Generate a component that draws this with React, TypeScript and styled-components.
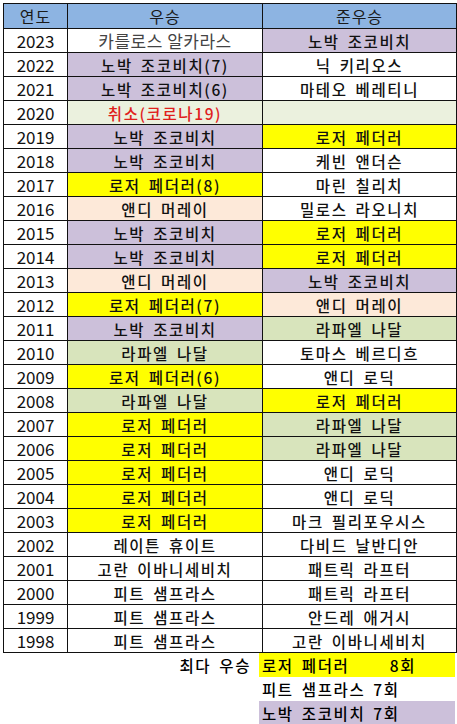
import React from "react";
import styled, { createGlobalStyle } from "styled-components";

const GlobalStyle = createGlobalStyle`
  html, body {
    margin: 0;
    padding: 0;
    background: #fff;
  }
  body {
    font-family: "Noto Sans CJK KR", "Noto Sans", sans-serif;
    color: #000;
  }
`;

type Tone = "none" | "lav" | "yellow" | "peach" | "green" | "cancel";

const tones: Record<Tone, string> = {
  none: "#ffffff",
  lav: "#ccc0da",
  yellow: "#ffff00",
  peach: "#fde9d9",
  green: "#d8e4bc",
  cancel: "#ebf1de",
};

type Row = {
  year: string;
  win: string;
  winTone: Tone;
  runner: string;
  runnerTone: Tone;
};

const rows: Row[] = [
  { year: "2023", win: "카를로스 알카라스", winTone: "none", runner: "노박 조코비치", runnerTone: "lav" },
  { year: "2022", win: "노박 조코비치(7)", winTone: "lav", runner: "닉 키리오스", runnerTone: "none" },
  { year: "2021", win: "노박 조코비치(6)", winTone: "lav", runner: "마테오 베레티니", runnerTone: "none" },
  { year: "2020", win: "취소(코로나19)", winTone: "cancel", runner: "", runnerTone: "cancel" },
  { year: "2019", win: "노박 조코비치", winTone: "lav", runner: "로저 페더러", runnerTone: "yellow" },
  { year: "2018", win: "노박 조코비치", winTone: "lav", runner: "케빈 앤더슨", runnerTone: "none" },
  { year: "2017", win: "로저 페더러(8)", winTone: "yellow", runner: "마린 칠리치", runnerTone: "none" },
  { year: "2016", win: "앤디 머레이", winTone: "peach", runner: "밀로스 라오니치", runnerTone: "none" },
  { year: "2015", win: "노박 조코비치", winTone: "lav", runner: "로저 페더러", runnerTone: "yellow" },
  { year: "2014", win: "노박 조코비치", winTone: "lav", runner: "로저 페더러", runnerTone: "yellow" },
  { year: "2013", win: "앤디 머레이", winTone: "peach", runner: "노박 조코비치", runnerTone: "lav" },
  { year: "2012", win: "로저 페더러(7)", winTone: "yellow", runner: "앤디 머레이", runnerTone: "peach" },
  { year: "2011", win: "노박 조코비치", winTone: "lav", runner: "라파엘 나달", runnerTone: "green" },
  { year: "2010", win: "라파엘 나달", winTone: "green", runner: "토마스 베르디흐", runnerTone: "none" },
  { year: "2009", win: "로저 페더러(6)", winTone: "yellow", runner: "앤디 로딕", runnerTone: "none" },
  { year: "2008", win: "라파엘 나달", winTone: "green", runner: "로저 페더러", runnerTone: "yellow" },
  { year: "2007", win: "로저 페더러", winTone: "yellow", runner: "라파엘 나달", runnerTone: "green" },
  { year: "2006", win: "로저 페더러", winTone: "yellow", runner: "라파엘 나달", runnerTone: "green" },
  { year: "2005", win: "로저 페더러", winTone: "yellow", runner: "앤디 로딕", runnerTone: "none" },
  { year: "2004", win: "로저 페더러", winTone: "yellow", runner: "앤디 로딕", runnerTone: "none" },
  { year: "2003", win: "로저 페더러", winTone: "yellow", runner: "마크 필리포우시스", runnerTone: "none" },
  { year: "2002", win: "레이튼 휴이트", winTone: "none", runner: "다비드 날반디안", runnerTone: "none" },
  { year: "2001", win: "고란 이바니세비치", winTone: "none", runner: "패트릭 라프터", runnerTone: "none" },
  { year: "2000", win: "피트 샘프라스", winTone: "none", runner: "패트릭 라프터", runnerTone: "none" },
  { year: "1999", win: "피트 샘프라스", winTone: "none", runner: "안드레 애거시", runnerTone: "none" },
  { year: "1998", win: "피트 샘프라스", winTone: "none", runner: "고란 이바니세비치", runnerTone: "none" },
];

const Page = styled.div`
  padding: 3px 0 0 3px;
  width: 454px;
`;

const Table = styled.table`
  border-collapse: collapse;
  table-layout: fixed;
  width: 453px;
  border: 1.5px solid #111;
`;

const Head = styled.th`
  background: #8db4e2;
  height: 23px;
  padding: 0;
  border: 1.5px solid #111;
  font-weight: 400;
  font-size: 16px;
  letter-spacing: 1px;
  color: #1a1a1a;
  text-align: center;
`;

const Cell = styled.td<{ $tone: Tone; $alert?: boolean; $soft?: boolean; $year?: boolean }>`
  background: ${(p) => tones[p.$tone]};
  height: 23px;
  padding: 0;
  border: 1.5px solid #111;
  text-align: center;
  font-size: ${(p) => (p.$soft ? "17px" : p.$year ? "17px" : "15.5px")};
  font-weight: ${(p) => (p.$soft || p.$year ? 400 : 500)};
  color: ${(p) => (p.$alert ? "#e0201c" : p.$soft ? "#444" : "#111")};
  letter-spacing: ${(p) => (p.$soft ? "0.5px" : p.$year ? "0" : "1.6px")};
  word-spacing: ${(p) => (p.$soft ? "0" : "3px")};
  line-height: 22px;
  white-space: nowrap;
`;

const Footer = styled.div`
  display: grid;
  grid-template-columns: 256px 196px;
`;

const FooterLabel = styled.div`
  height: 24px;
  line-height: 24px;
  text-align: right;
  padding-right: 8px;
  font-size: 15.5px;
  font-weight: 500;
  letter-spacing: 1.6px;
  word-spacing: 3px;
`;

const FooterCell = styled.div<{ $tone: Tone }>`
  height: 24px;
  line-height: 24px;
  background: ${(p) => tones[p.$tone]};
  padding-left: 3px;
  font-size: 15.5px;
  font-weight: 500;
  letter-spacing: 1.6px;
  word-spacing: 3px;
  white-space: pre;
`;

export default function App() {
  return (
    <Page>
      <GlobalStyle />
      <Table>
        <colgroup>
          <col style={{ width: 64 }} />
          <col style={{ width: 195 }} />
          <col style={{ width: 194 }} />
        </colgroup>
        <thead>
          <tr>
            <Head>연도</Head>
            <Head>우승</Head>
            <Head>준우승</Head>
          </tr>
        </thead>
        <tbody>
          {rows.map((r) => (
            <tr key={r.year}>
              <Cell $tone="none" $year>
                {r.year}
              </Cell>
              <Cell
                $tone={r.winTone}
                $alert={r.winTone === "cancel"}
                $soft={r.year === "2023"}
              >
                {r.win}
              </Cell>
              <Cell $tone={r.runnerTone}>{r.runner}</Cell>
            </tr>
          ))}
        </tbody>
      </Table>
      <Footer>
        <FooterLabel>최다 우승</FooterLabel>
        <FooterCell $tone="yellow">{"로저 페더러     8회"}</FooterCell>
        <div />
        <FooterCell $tone="none">피트 샘프라스 7회</FooterCell>
        <div />
        <FooterCell $tone="lav">노박 조코비치 7회</FooterCell>
      </Footer>
    </Page>
  );
}
